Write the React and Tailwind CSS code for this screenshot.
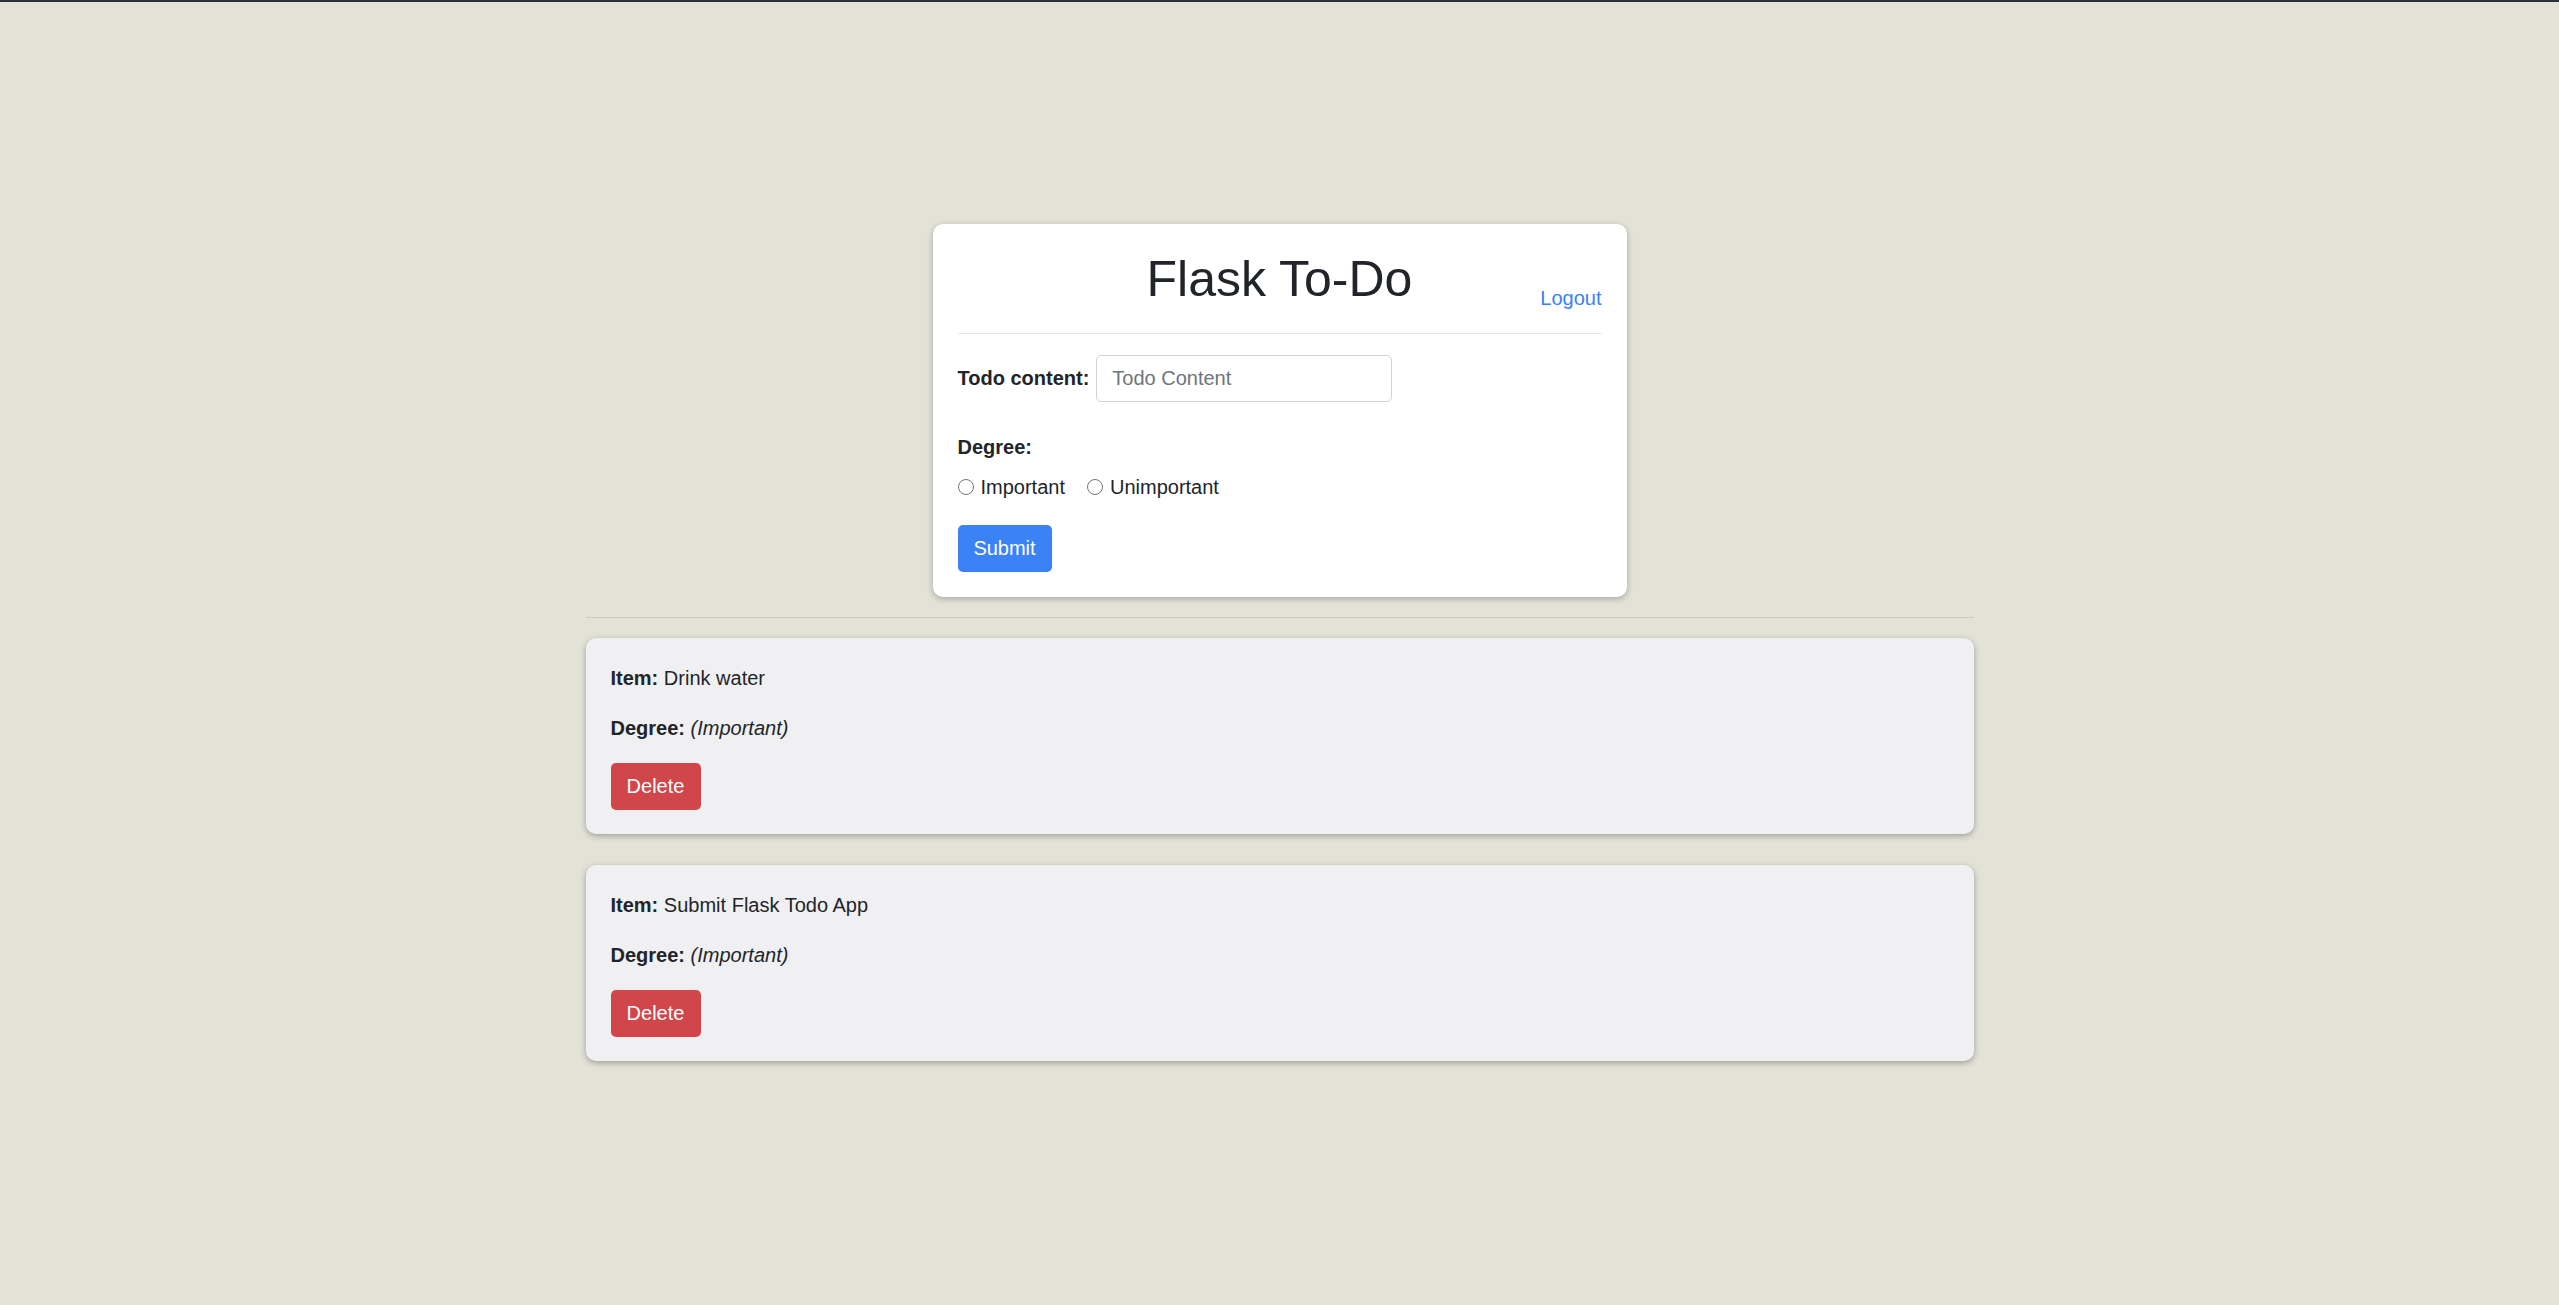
export default function App() {
  const todos = [
    { id: 1, content: 'Drink water', degree: 'Important' },
    { id: 2, content: 'Submit Flask Todo App', degree: 'Important' },
  ]

  return (
    <div
      className="min-h-screen bg-[#e2e2d7] border-t-2 border-[#2e2f3d] text-[20px] leading-[30px] text-[#212529]"
      style={{ fontFamily: '"Liberation Sans", Arial, sans-serif' }}
    >
      <div className="w-[1388px] mx-auto pt-[222px]">
        
        <div className="w-[694px] mx-auto bg-white rounded-[10px] shadow-[0_2px_6px_rgba(0,0,0,0.25)] px-[25px] pt-[25px] pb-[25px]">
          <div className="grid grid-cols-[1fr_auto_1fr]">
            <div />
            <h1 className="text-[50px] leading-[60px] font-normal">Flask To-Do</h1>
            <a href="#" className="justify-self-end self-end -mb-[4px] text-[#3b82f6]">
              Logout
            </a>
          </div>
          <hr className="mt-[24px] border-t border-[#e5e5e5]" />

          <form className="mt-[21px]" onSubmit={(e) => e.preventDefault()}>
            <div className="flex items-baseline gap-[7px]">
              <label className="font-bold">Todo content:</label>
              <input
                type="text"
                placeholder="Todo Content"
                className="w-[296px] h-[47px] border border-[#ced4da] rounded-[5px] px-[15px] text-[20px] placeholder:text-[#6c757d] outline-none"
              />
            </div>

            <div className="mt-[30px] font-bold">Degree:</div>
            <div className="mt-[10px] flex items-center gap-[22px]">
              <label className="flex items-center gap-[7px]">
                <span className="w-[16px] h-[16px] rounded-full border border-[#767676] bg-white" />
                Important
              </label>
              <label className="flex items-center gap-[7px]">
                <span className="w-[16px] h-[16px] rounded-full border border-[#767676] bg-white" />
                Unimportant
              </label>
            </div>

            <button className="mt-[23px] h-[47px] w-[94px] pb-[2px] bg-[#3b82f6] text-white rounded-[5px]">
              Submit
            </button>
          </form>
        </div>

        <hr className="mt-[20px] border-t border-[#cbcbc0]" />

        <div className="mt-[20px] flex flex-col gap-[31px]">
          {todos.map((todo) => (
            <div
              key={todo.id}
              className="bg-[#f0f0f2] rounded-[10px] shadow-[0_2px_6px_rgba(0,0,0,0.3)] px-[25px] pt-[25px] pb-[24px]"
            >
              <p>
                <b>Item:</b> {todo.content}
              </p>
              <p className="mt-[20px]">
                <b>Degree:</b> <i>({todo.degree})</i>
              </p>
              <button className="mt-[20px] h-[47px] w-[90px] pb-[2px] bg-[#d0464b] text-white rounded-[5px]">
                Delete
              </button>
            </div>
          ))}
        </div>
      </div>
    </div>
  )
}
